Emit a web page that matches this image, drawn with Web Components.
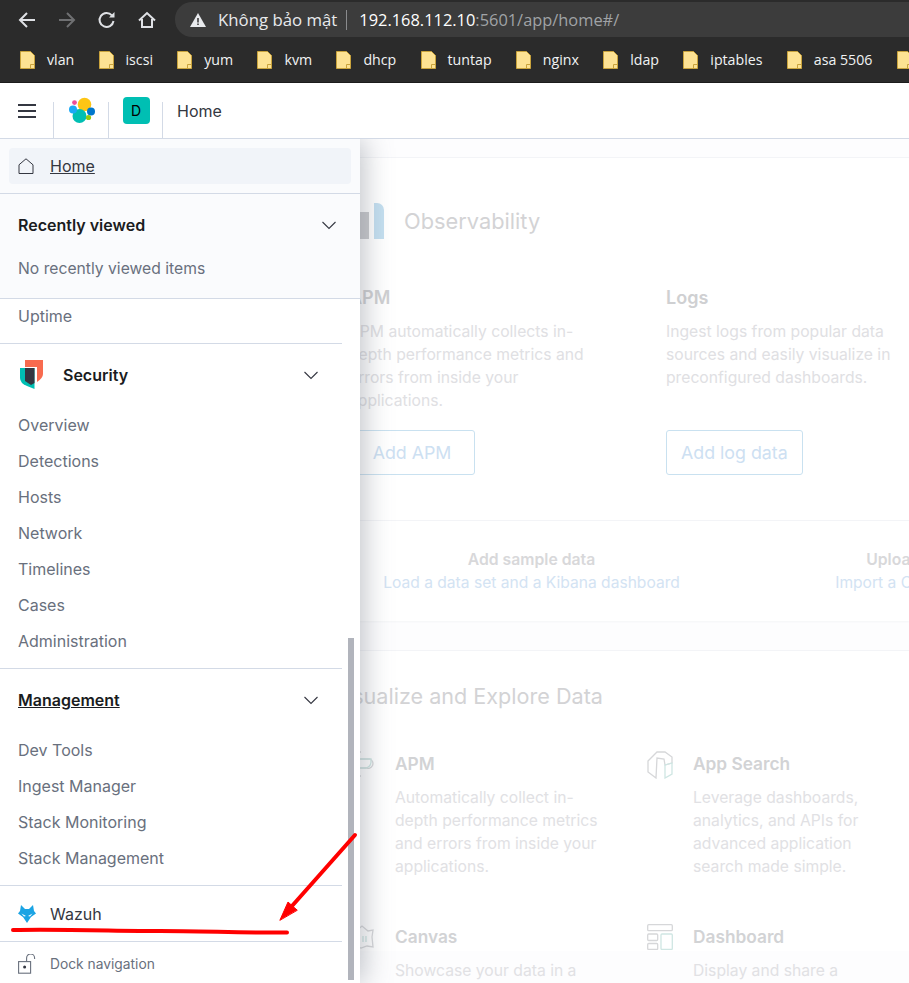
<!DOCTYPE html>
<html>
<head>
<meta charset="utf-8">
<style>
  html,body{margin:0;height:100%;overflow:hidden;background:#fff}
  body{font-family:Inter,"Liberation Sans",sans-serif;display:flex;flex-direction:column;position:relative;height:983px}
</style>
</head>
<body>
<browser-bar></browser-bar>
<kbn-header></kbn-header>
<kbn-app>
  <home-content></home-content>
  <nav-drawer slot="drawer"></nav-drawer>
</kbn-app>
<red-marks></red-marks>

<script>
class BrowserBar extends HTMLElement{
    constructor(){
        super()
        this.attachShadow({mode : 'open'})
    }
    connectedCallback(){
        const marks = ['vlan','iscsi','yum','kvm','dhcp','tuntap','nginx','ldap','iptables','asa 5506','']
        const folder = `<svg width="15" height="18" viewBox="0 0 15 18"><path d="M.5.5h10l4 4v13H.5z" fill="#fde293" stroke="#c9a33c"/><path d="M10.5 17.5v-4h4" fill="none" stroke="#c9a33c"/></svg>`
        this.shadowRoot.innerHTML = `
            <style>
                :host{display:block;height:83px;background:#2b2b2b;font-family:"Open Sans","Noto Sans",sans-serif;flex:none}
                .top{height:37px;display:flex;padding-top:2px;box-sizing:border-box}
                .btns{width:175px;display:flex;flex:none;box-sizing:border-box;padding-left:17px;gap:20px;align-items:center}
                .btns svg{display:block;width:20px;height:20px}
                .omni{flex:1;background:#3c3c3c;border-radius:17px 0 0 17px;display:flex;align-items:center;color:#e8eaed;font-size:16.8px;padding-left:15px}
                .omni svg{margin-right:12px}
                .sep{width:1px;height:20px;background:#8a8b8d;margin:0 12px 0 9px}
                .url{font-size:16.4px}
                .host{color:#fff}
                .path{color:#a0a3a6}
                .marks{height:45px;display:flex;align-items:center;gap:24.25px;padding-left:20px;color:#f1f3f4;font-size:14.2px;border-bottom:1px solid #1c1c1c;white-space:nowrap;overflow:hidden}
                .mark{display:flex;align-items:center;gap:12px}
                .mark svg{display:block;flex:none}
            </style>
            <div class="top">
                <div class="btns">
                    <svg viewBox="0 0 20 20" fill="none" stroke="#dfe1e5" stroke-width="2"><path d="M18 10H3M10 3l-7 7 7 7"/></svg>
                    <svg viewBox="0 0 20 20" fill="none" stroke="#6f7072" stroke-width="2"><path d="M2 10h15M10 3l7 7-7 7"/></svg>
                    <svg viewBox="0 0 20 20" fill="none" stroke="#dfe1e5" stroke-width="2"><path d="M16.500 11a7 7 0 1 1-1.600-5.600"/><path d="M17.500 2v5.500H12" fill="#dfe1e5" stroke="none"/></svg>
                    <svg viewBox="0 0 20 20" fill="none" stroke="#dfe1e5" stroke-width="2"><path d="M2 10.500 10 3l8 7.500M5 9v8h10V9"/></svg>
                </div>
                <div class="omni">
                    <svg width="16" height="14" viewBox="0 0 16 14"><path d="M8 0l8 14H0z" fill="#e8eaed"/><path d="M7.200 5h1.600v4.500H7.200zM7.200 10.500h1.600v1.600H7.200z" fill="#3c3c3c"/></svg>
                    <span>Không bảo mật</span><span class="sep"></span><span class="url"><span class="host">192.168.112.10</span><span class="path">:5601/app/home#/</span></span>
                </div>
            </div>
            <div class="marks">
                ${marks.map(m => `<span class="mark">${folder}${m ? `<span>${m}</span>` : ''}</span>`).join('')}
            </div>
        `
    }
}
customElements.define('browser-bar',BrowserBar)

class KbnHeader extends HTMLElement{
    constructor(){
        super()
        this.attachShadow({mode : 'open'})
    }
    connectedCallback(){
        this.shadowRoot.innerHTML = `
            <style>
                :host{display:flex;height:56px;box-sizing:border-box;background:#fff;border-bottom:1px solid #d3dae6;flex:none;position:relative;z-index:3}
                .cell{display:flex;align-items:center;justify-content:center;box-sizing:border-box;height:55px}
                .cell.line{position:relative}
                .cell.line::after{content:"";position:absolute;right:0;top:19px;bottom:0;width:1px;background:#d3dae6}
                .burger{width:54px}
                .logo{width:55px}
                .space{width:54px}
                .avatar{width:27px;height:27px;border-radius:4px;background:#00bfb3;color:#000;font-size:14px;display:flex;align-items:center;justify-content:center}
                .crumb{margin-left:14px;font-size:16px;color:#343741;display:flex;align-items:center}
            </style>
            <div class="cell line burger">
                <svg width="18" height="14" viewBox="0 0 18 14" fill="#343741"><rect width="18" height="2" y="0"/><rect width="18" height="2" y="6"/><rect width="18" height="2" y="12"/></svg>
            </div>
            <div class="cell line logo">
                <svg width="28" height="28" viewBox="0 0 28 28">
                    <circle cx="16.500" cy="7.500" r="6.800" fill="#fec514"/>
                    <circle cx="11.500" cy="19" r="7" fill="#00bfb3"/>
                    <circle cx="6.500" cy="5.600" r="2.400" fill="#f04e98"/>
                    <circle cx="5" cy="12.600" r="4" fill="#1ba9f5"/>
                    <circle cx="23" cy="14.500" r="4" fill="#0077cc"/>
                    <circle cx="20.500" cy="20.500" r="2.600" fill="#93c90e"/>
                </svg>
            </div>
            <div class="cell line space"><div class="avatar">D</div></div>
            <div class="crumb">Home</div>
        `
    }
}
customElements.define('kbn-header',KbnHeader)

// page body: faded home page with the drawer lying over it
class KbnApp extends HTMLElement{
    constructor(){
        super()
        this.attachShadow({mode : 'open'})
    }
    connectedCallback(){
        this.shadowRoot.innerHTML = `
            <style>
                :host{display:block;position:relative;flex:1;min-height:0;overflow:hidden}
                .over{position:absolute;left:0;top:0;bottom:0;width:360px;z-index:2}
            </style>
            <slot></slot>
            <div class="over"><slot name="drawer"></slot></div>
        `
    }
}
customElements.define('kbn-app',KbnApp)

class SolutionCard extends HTMLElement{
    constructor(){
        super()
        this.attachShadow({mode : 'open'})
    }
    connectedCallback(){
        this.shadowRoot.innerHTML = `
            <style>
                :host{display:block;width:298px;flex:none;box-sizing:border-box}
                .wrap{display:flex;gap:20px}
                .ic{width:26px;flex:none;height:26px;margin-top:-1px}
                h4{margin:0;font-size:17.3px;line-height:24px;font-weight:600;color:#d2d3d5}
                p{margin:10px 0 0;font-size:15.7px;line-height:23px;color:#e1e1e4;width:208px}
            </style>
            <div class="wrap">
                <div class="ic"><slot name="icon"></slot></div>
                <div>
                    <h4>${this.getAttribute('title')}</h4>
                    <p><slot></slot></p>
                </div>
            </div>
        `
    }
}
customElements.define('solution-card',SolutionCard)

class HomeContent extends HTMLElement{
    constructor(){
        super()
        this.attachShadow({mode : 'open'})
    }
    connectedCallback(){
        this.shadowRoot.innerHTML = `
            <style>
                :host{display:block;background:#fdfdfe;height:844px;overflow:hidden;width:909px}
                .sec{background:#fff;border-top:1px solid #f3f4f7}
                .obs{margin-top:18px;height:363px;box-sizing:border-box;padding:45px 0 0 349px}
                .obs-head{display:flex;align-items:center;gap:19px;height:36px;margin-left:-4px}
                .obs-head h3{margin:0;font-size:21.8px;font-weight:400;color:#d3d3d5;line-height:36px}
                .cols{display:flex;margin-top:47px}
                .col{width:317px;flex:none}
                .col h4{margin:0;font-size:18px;line-height:24px;font-weight:600;color:#cfd0d2}
                .col p{margin:10px 0 0;font-size:15.7px;line-height:23px;color:#e0e0e3;width:250px;height:92px}
                .btn{display:inline-block;box-sizing:border-box;height:45px;min-width:112px;padding:0 14px;line-height:44px;margin-top:18px;border:1px solid #c9e1f0;border-radius:3px;color:#cde0f2;font-size:17.8px;text-align:center}
                .btn.apm{width:126px}
                .data{border-top:1px solid #f3f4f7;height:101px;box-sizing:border-box;display:flex;padding:27px 0 0 318px;background:#fff;box-shadow:0 1px 2px #f4f5f7}
                .data div{width:427px;flex:none;text-align:center;font-size:15.75px;line-height:23px}
                .data div + div{margin-left:1px}
                .data b{display:block;color:#d8d8da;font-weight:600}
                .data span{color:#d3e3f3;white-space:nowrap;font-size:15.6px}
                .vis{margin-top:29px;padding:0 0 0 332px;height:300px}
                .vis h3{margin:0;padding-top:30px;font-size:21.6px;font-weight:400;line-height:30px;color:#d3d3d5}
                .rows{display:flex;flex-wrap:wrap;width:600px;margin:41px 0 0 17px}
                .rows solution-card{margin-bottom:47px}
                svg{display:block}
            </style>
            <div class="sec obs">
                <div class="obs-head">
                    <svg width="40" height="36" viewBox="0 0 40 36"><rect x="4" y="9" width="20" height="27" fill="#c9cacd"/><path d="M29 0h3a7 7 0 0 1 7 7v29H29z" fill="#c4dff0"/></svg>
                    <h3>Observability</h3>
                </div>
                <div class="cols">
                    <div class="col">
                        <h4>APM</h4>
                        <p>APM automatically collects in-depth performance metrics and errors from inside your applications.</p>
                        <span class="btn apm">Add APM</span>
                    </div>
                    <div class="col">
                        <h4>Logs</h4>
                        <p>Ingest logs from popular data sources and easily visualize in preconfigured dashboards.</p>
                        <span class="btn">Add log data</span>
                    </div>
                </div>
            </div>
            <div class="data">
                <div><b>Add sample data</b><span>Load a data set and a Kibana dashboard</span></div>
                <div><b>Upload data from log file</b><span>Import a CSV, NDJSON, or log file</span></div>
            </div>
            <div class="sec vis">
                <h3>Visualize and Explore Data</h3>
                <div class="rows">
                    <solution-card title="APM">
                        <svg slot="icon" width="26" height="26" viewBox="0 0 26 26" fill="none" stroke="#d6d7d9" stroke-width="1.300"><path d="M12 1H1v3M12 25H1v-3M1 8h20a4 4 0 0 1-4 9H6"/><path d="M4 8h18v3a6 6 0 0 1-6 6H8" stroke="#cfe6e3"/></svg>
                        Automatically collect in-depth performance metrics and errors from inside your applications.
                    </solution-card>
                    <solution-card title="App Search">
                        <svg slot="icon" width="26" height="28" viewBox="0 0 26 28" fill="none" stroke="#d6d7d9" stroke-width="1.300"><path d="M1 10 10 1h8l7 5v6l-7 2-1-6-7-1-1 20-8-6z"/><path d="M18 27V14l7-2v11z" stroke="#cfe6e3"/></svg>
                        Leverage dashboards, analytics, and APIs for advanced application search made simple.
                    </solution-card>
                    <solution-card title="Canvas">
                        <svg slot="icon" width="26" height="26" viewBox="0 0 26 26" fill="none" stroke="#d6d7d9" stroke-width="1.300"><path d="M2 6 7 7l6-5 6 5 5-1-1 7 1 10-6-1-6 2-6-2-5 1 1-10z"/><path d="M10 12v6M14 12v6M17 12v6" stroke="#cfe6e3"/></svg>
                        Showcase your data in a pixel-perfect way.
                    </solution-card>
                    <solution-card title="Dashboard">
                        <svg slot="icon" width="26" height="26" viewBox="0 0 26 26" fill="none" stroke="#d6d7d9" stroke-width="1.300"><rect x=".7" y=".7" width="24.600" height="6" rx="1"/><rect x=".7" y="10" width="10" height="6.500" rx="1"/><rect x=".7" y="19.500" width="10" height="6" rx="1"/><rect x="14" y="10" width="11.300" height="15.500" rx="1" stroke="#cfe6e3"/></svg>
                        Display and share a collection of visualizations.
                    </solution-card>
                </div>
            </div>
        `
    }
}
customElements.define('home-content',HomeContent)

class NavLink extends HTMLElement{
    constructor(){
        super()
        this.attachShadow({mode : 'open'})
        this.shadowRoot.innerHTML = `
            <style>
                :host{display:flex;align-items:center;height:36px;padding-left:18px;font-size:16px;color:#69707d}
            </style>
            <slot></slot>
        `
    }
}
customElements.define('nav-link',NavLink)

class NavGroup extends HTMLElement{
    constructor(){
        super()
        this.attachShadow({mode : 'open'})
    }
    connectedCallback(){
        const under = this.hasAttribute('underline') ? 'underline' : 'none'
        this.shadowRoot.innerHTML = `
            <style>
                :host{display:block;border-top:1px solid #d3dae6;padding-bottom:9px}
                .head{display:flex;align-items:center;height:63px;box-sizing:border-box;padding:0 23px 2px 18px;gap:18px}
                .title{flex:1;font-size:16px;font-weight:600;color:#1a1c21;text-decoration:${under}}
                svg.chev{display:block}
            </style>
            <div class="head">
                <slot name="icon"></slot>
                <span class="title">${this.getAttribute('title')}</span>
                <svg class="chev" width="16" height="16" viewBox="0 0 16 16" fill="none" stroke="#343741" stroke-width="1.100"><path d="M1.500 5 8 11.500 14.500 5"/></svg>
            </div>
            <slot></slot>
        `
    }
}
customElements.define('nav-group',NavGroup)

class NavDrawer extends HTMLElement{
    constructor(){
        super()
        this.attachShadow({mode : 'open'})
    }
    connectedCallback(){
        this.shadowRoot.innerHTML = `
            <style>
                :host{display:flex;flex-direction:column;height:100%;width:360px;background:#fff;box-shadow:4px 0 26px rgba(105,112,125,.42);position:relative}
                .pin{background:#fafbfd;flex:none;border-bottom:1px solid #d3dae6}
                .home{padding:9px;border-bottom:1px solid #d3dae6}
                .home div{height:36px;background:#f1f4f9;border-radius:4px;display:flex;align-items:center;padding-left:9px;gap:16px;font-size:16px;color:#343741}
                .home span{text-decoration:underline}
                .recent{height:104px;box-sizing:border-box;padding:0 23px 0 18px}
                .recent .h{display:flex;justify-content:space-between;align-items:center;height:62px;font-weight:600;font-size:16px;color:#1a1c21}
                .recent .none{font-size:15.7px;color:#69707d;line-height:24px;margin-top:1px}
                .scroll{width:342px;flex:none}
                .uptime{margin-top:-1px;padding-bottom:9px}
                .wazuh{border-top:1px solid #d3dae6;height:56px;display:flex;align-items:center;padding-left:18px;gap:14px;font-size:16px;color:#343741;box-sizing:border-box}
                .dock{border-top:1px solid #d3dae6;height:44px;display:flex;align-items:center;padding-left:18px;gap:14px;font-size:13.8px;color:#69707d;box-sizing:border-box}
                .bar{position:absolute;left:348px;top:499px;bottom:3px;width:6px;background:#b1b4bc}
                svg{display:block;flex:none}
            </style>
            <div class="pin">
                <div class="home"><div>
                    <svg width="16" height="16" viewBox="0 0 16 16" fill="none" stroke="#343741" stroke-width="1"><path d="M1 6.800 8 .8l7 6v8.700H1z"/></svg>
                    <span>Home</span>
                </div></div>
                <div class="recent">
                    <div class="h"><span>Recently viewed</span>
                        <svg width="16" height="16" viewBox="0 0 16 16" fill="none" stroke="#343741" stroke-width="1.100"><path d="M1.500 5 8 11.500 14.500 5"/></svg>
                    </div>
                    <div class="none">No recently viewed items</div>
                </div>
            </div>
            <div class="scroll">
                <div class="uptime"><nav-link>Uptime</nav-link></div>
                <nav-group title="Security">
                    <svg slot="icon" style="display:block;flex:none" width="27" height="32" viewBox="0 0 27 32">
                        <path d="M7 1h18v14q0 4-6 8V8H7z" fill="#f86b4f"/>
                        <path d="M2 9h14.500v21L9 27q-7-3-7-8z" fill="#00bfb3"/>
                        <path d="M7 9h9.500v15L13 26l-6-4z" fill="#343741"/>
                    </svg>
                    <nav-link>Overview</nav-link>
                    <nav-link>Detections</nav-link>
                    <nav-link>Hosts</nav-link>
                    <nav-link>Network</nav-link>
                    <nav-link>Timelines</nav-link>
                    <nav-link>Cases</nav-link>
                    <nav-link>Administration</nav-link>
                </nav-group>
                <nav-group title="Management" underline>
                    <nav-link>Dev Tools</nav-link>
                    <nav-link>Ingest Manager</nav-link>
                    <nav-link>Stack Monitoring</nav-link>
                    <nav-link>Stack Management</nav-link>
                </nav-group>
                <div class="wazuh">
                    <svg width="18" height="18" viewBox="0 0 18 18" fill="#1ba4e4"><path d="M3 0 7 4h4l4-4 1 6 2 2.500-5 3.500-4 6-4-6-5-3.500L2 6z"/><path d="M3.500 8.500 8 11l-2 .6zM14.500 8.500 10 11l2 .6z" fill="#fff"/></svg>
                    <span>Wazuh</span>
                </div>
                <div class="dock">
                    <svg width="18" height="20" viewBox="0 0 18 20" fill="none" stroke="#69707d" stroke-width="1.100"><rect x=".6" y="7.600" width="12" height="11.600"/><path d="M8.600 7.500V4a4 4 0 0 1 8 0v1"/><circle cx="6.600" cy="13" r="1.500" fill="#343741" stroke="none"/></svg>
                    <span>Dock navigation</span>
                </div>
            </div>
            <div class="bar"></div>
        `
    }
}
customElements.define('nav-drawer',NavDrawer)

// hand drawn annotation on top of the screenshot
class RedMarks extends HTMLElement{
    constructor(){
        super()
        this.attachShadow({mode : 'open'})
    }
    connectedCallback(){
        this.shadowRoot.innerHTML = `
            <style>
                :host{position:absolute;left:0;top:0;width:909px;height:983px;pointer-events:none;z-index:5}
            </style>
            <svg width="909" height="983" viewBox="0 0 909 983" fill="none" stroke="#f00" stroke-linecap="round">
                <path d="M355 835 292 906" stroke-width="4"/>
                <path d="M280 920 288 902 297 910z" fill="#f00" stroke="#f00" stroke-width="1"/>
                <path d="M13 930C60 929 120 931 160 931S250 933 287 932.500" stroke-width="4"/>
            </svg>
        `
    }
}
customElements.define('red-marks',RedMarks)
</script>
</body>
</html>
